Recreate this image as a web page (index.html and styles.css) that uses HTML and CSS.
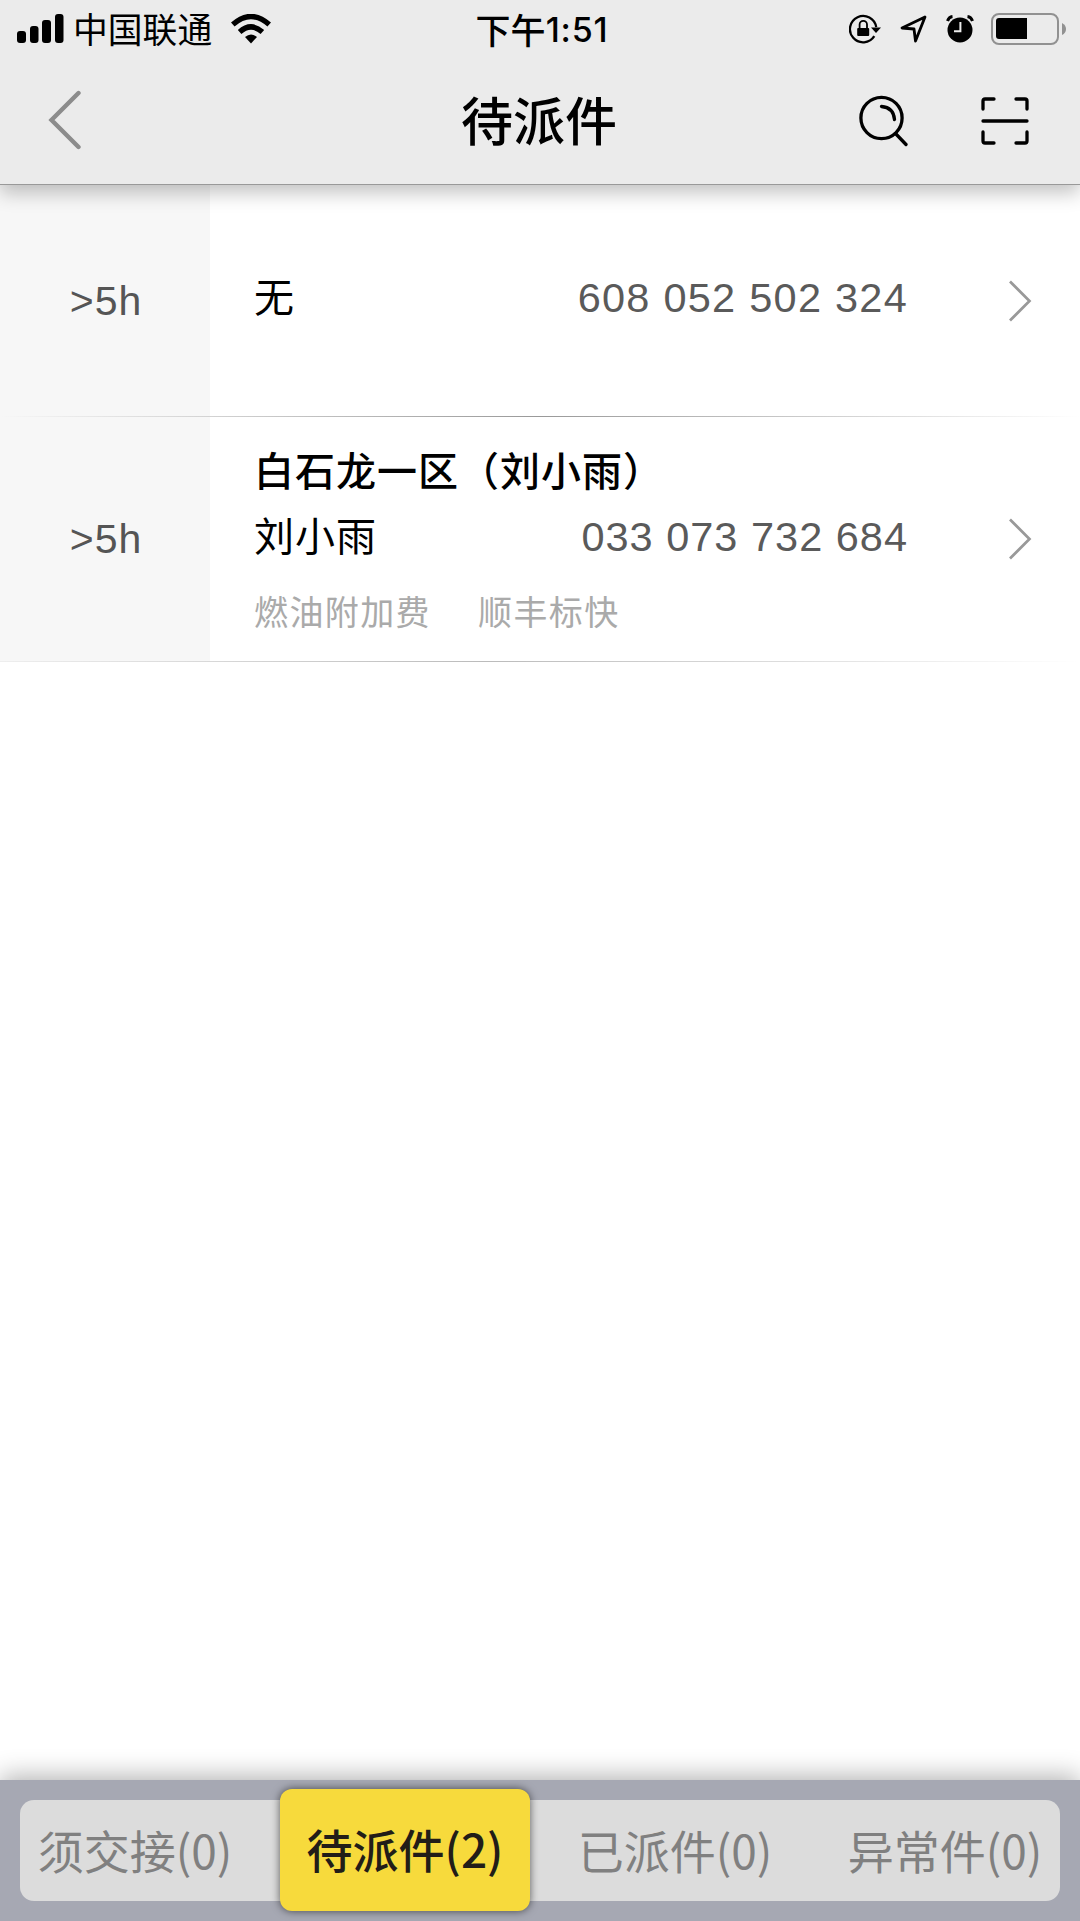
FILE: index.html
```html
<!DOCTYPE html>
<html lang="zh-CN">
<head>
    <meta charset="UTF-8">
    <meta name="viewport" content="width=device-width, initial-scale=1.0">
    <title>待派件</title>
    <link rel="stylesheet" href="styles.css">
</head>
<body>
    <header class="header">
        <div class="status-bar">
            <div class="status-left">
                <svg class="signal" width="47" height="30" viewBox="0 0 47 30">
                    <rect x="0" y="17" width="9" height="12" rx="3"/>
                    <rect x="13" y="12" width="8.5" height="17" rx="3"/>
                    <rect x="25" y="6" width="9" height="23" rx="3"/>
                    <rect x="38" y="0" width="8.5" height="29" rx="3"/>
                </svg>
                <span class="carrier">中国联通</span>
                <svg class="wifi" width="40" height="30" viewBox="0 0 40 30">
                    <path d="M1.8 10.6Q20 -5.5 38.2 10.6M8.6 18Q20 7.8 31.4 18" fill="none" stroke="#000" stroke-width="5.4"/>
                    <path d="M14 23Q20 18 26 23L20 29.5Z"/>
                </svg>
            </div>
            <div class="time">下午<span class="time-digits">1:51</span></div>
            <div class="status-right">
                <svg width="33" height="30" viewBox="0 0 33 30">
                    <path d="M27.2 13.2A13.2 13.2 0 1 0 25.3 22.2" fill="none" stroke="#000" stroke-width="2.3"/>
                    <path d="M22 13.5H32L27 19Z"/>
                    <rect x="8.2" y="14" width="12" height="8" rx="1"/>
                    <path d="M10.6 14V10.5A3.7 3.7 0 0 1 18 10.5V14" fill="none" stroke="#000" stroke-width="1.8"/>
                </svg>
                <svg class="location" width="27" height="28" viewBox="0 0 27 28">
                    <path d="M25 2L2 13L14 14L15.5 26Z" fill="none" stroke="#000" stroke-width="2.8" stroke-linejoin="round"/>
                </svg>
                <svg class="alarm" width="28" height="28" viewBox="0 0 28 28">
                    <circle cx="14" cy="15" r="12.5"/>
                    <path d="M1.5 6Q3 2 6.5 1.6M26.5 6Q25 2 21.5 1.6" fill="none" stroke="#000" stroke-width="3"/>
                    <path d="M14.4 7V16.3H8" fill="none" stroke="#ebebeb" stroke-width="2"/>
                </svg>
                <svg class="battery" width="76" height="32" viewBox="0 0 76 32">
                    <rect x="1" y="1" width="66" height="30" rx="7" fill="none" stroke="#919191" stroke-width="2"/>
                    <path d="M8 5H36V26H8Q5 26 5 23V8Q5 5 8 5Z"/>
                    <path d="M71 10Q75 12 75 16Q75 20 71 22Z" fill="#919191"/>
                </svg>
            </div>
        </div>
        <div class="nav">
            <div class="nav-left">
                <svg width="36" height="60" viewBox="0 0 36 60">
                    <path d="M31.5 3L4.5 30L31.5 57" fill="none" stroke="#8c8c8c" stroke-width="4.4" stroke-linecap="round"/>
                </svg>
            </div>
            <h1 class="title">待派件</h1>
            <div class="nav-right">
                <svg width="50" height="52" viewBox="0 0 50 52" fill="none" stroke="#000" stroke-width="3.3" stroke-linecap="round">
                    <circle cx="23.5" cy="23" r="20.6"/>
                    <path d="M37.5 38.5L48 49.5M23.5 11.5Q35.5 12.5 36.5 24.5"/>
                </svg>
                <svg width="48" height="48" viewBox="0 0 48 48" fill="none" stroke="#000" stroke-width="3.3" stroke-linecap="round">
                    <path d="M2 12V4Q2 2 4 2H13M35 2H44Q46 2 46 4V12M2 35V44Q2 46 4 46H13M35 46H44Q46 46 46 44V35M2 24H46"/>
                </svg>
            </div>
        </div>
    </header>

    <main class="list">
        <div class="item item-short">
            <div class="age">&gt;5h</div>
            <div class="info">
                <div class="person">
                    <span class="name">无</span>
                    <span class="number">608 052 502 324</span>
                </div>
            </div>
            <svg class="chevron" width="24" height="42" viewBox="0 0 24 42">
                <path d="M2 1.5L21.5 21L2 40.5" fill="none" stroke="#999" stroke-width="2.7"/>
            </svg>
        </div>
        <div class="divider"></div>
        <div class="item item-tall">
            <div class="age">&gt;5h</div>
            <div class="info">
                <div class="address">白石龙一区（刘小雨）</div>
                <div class="person">
                    <span class="name">刘小雨</span>
                    <span class="number">033 073 732 684</span>
                </div>
                <div class="tags">
                    <span>燃油附加费</span>
                    <span>顺丰标快</span>
                </div>
            </div>
            <svg class="chevron" width="24" height="42" viewBox="0 0 24 42">
                <path d="M2 1.5L21.5 21L2 40.5" fill="none" stroke="#999" stroke-width="2.7"/>
            </svg>
        </div>
        <div class="divider divider-last"></div>
    </main>

    <footer class="footer">
        <nav class="tabs">
            <div class="tab">须交接(0)</div>
            <div class="tab active">待派件(2)</div>
            <div class="tab">已派件(0)</div>
            <div class="tab">异常件(0)</div>
        </nav>
    </footer>
</body>
</html>
```

FILE: styles.css
```css
* {
    box-sizing: border-box;
}

body {
    margin: 0;
    width: 1080px;
    height: 1921px;
    display: flex;
    flex-direction: column;
    background: #fff;
    color: #000;
    font-family: "Noto Sans CJK SC", sans-serif;
    overflow: hidden;
}

svg {
    display: block;
    flex-shrink: 0;
}

/* Header */
.header {
    height: 185px;
    flex-shrink: 0;
    background: #ebebeb;
    border-bottom: 1px solid #999;
    box-shadow: 0 8px 18px rgba(0, 0, 0, 0.24);
    z-index: 1;
}

.status-bar {
    height: 58px;
    display: grid;
    grid-template-columns: 1fr auto 1fr;
    align-items: center;
    padding: 0 13px 0 17px;
}

.status-left,
.status-right {
    display: flex;
    align-items: center;
}

.status-right {
    justify-content: flex-end;
}

.carrier {
    margin-left: 9px;
    padding-bottom: 2px;
    font-size: 34.8px;
    line-height: 56px;
}

.wifi {
    margin-left: 19px;
}

.time {
    display: flex;
    align-items: center;
    padding-bottom: 1px;
    font-size: 35px;
    line-height: 55px;
    font-weight: 500;
}

.time-digits {
    padding-top: 2px;
    font-family: Inter, sans-serif;
    font-size: 34px;
    font-weight: 500;
    letter-spacing: 0.8px;
}

.location {
    margin-left: 18px;
}

.alarm {
    margin-left: 19px;
}

.battery {
    margin-left: 17px;
}

.nav {
    height: 126px;
    display: grid;
    grid-template-columns: 1fr auto 1fr;
    align-items: center;
    padding: 0 51px 0 47px;
}

.nav-left {
    padding-bottom: 3px;
}

.title {
    margin: 0;
    padding: 0 0 5px 2px;
    font-size: 52px;
    line-height: 76px;
    font-weight: 500;
}

.nav-right {
    display: flex;
    align-items: center;
    justify-content: flex-end;
    gap: 73px;
}

/* List */
.list {
    flex: 1;
}

.item {
    display: flex;
    align-items: center;
}

.item-short {
    height: 231px;
}

.item-tall {
    height: 244px;
}

.age {
    width: 210px;
    height: 100%;
    flex-shrink: 0;
    display: flex;
    align-items: center;
    justify-content: center;
    padding: 1px 0 0 2px;
    background: #f7f7f7;
    color: #555;
    font-family: "Liberation Sans", sans-serif;
    font-size: 41px;
    letter-spacing: 1px;
}

.info {
    width: 698px;
    padding-left: 44px;
}

.item-short .info {
    padding-bottom: 6px;
}

.item-tall .info {
    padding-top: 9px;
}

.address {
    margin-bottom: 2px;
    font-size: 40px;
    line-height: 64px;
    font-weight: 500;
    letter-spacing: 1px;
}

.person {
    display: flex;
    align-items: center;
    justify-content: space-between;
    line-height: 68px;
}

.name {
    margin-top: -5px;
    font-size: 40px;
    line-height: 63px;
    letter-spacing: 1px;
}

.number {
    color: #5a5a5a;
    font-family: "Liberation Sans", sans-serif;
    font-size: 41.5px;
    letter-spacing: 1.25px;
}

.item-tall .number {
    letter-spacing: 1px;
}

.tags {
    display: flex;
    gap: 47px;
    color: #aaa;
    font-size: 34px;
    line-height: 80px;
    letter-spacing: 1.4px;
}

.chevron {
    margin-left: 100px;
}

.divider {
    height: 1px;
    background: linear-gradient(to right, #f7f7f7, #999 50%, #fff);
}

.divider-last {
    background: linear-gradient(to right, #eee, #bbb 45%, #fff);
}

/* Bottom tabs */
.footer {
    height: 141px;
    flex-shrink: 0;
    padding: 20px;
    background: #a6a8b3;
    box-shadow: 0 -4px 24px rgba(0, 0, 0, 0.3);
}

.tabs {
    height: 101px;
    display: grid;
    grid-template-columns: repeat(4, 270px);
    justify-content: center;
    background: #dcdcdc;
    border-radius: 14px;
}

.tab {
    display: flex;
    align-items: center;
    justify-content: center;
    padding-bottom: 4px;
    color: #808080;
    font-size: 46px;
    white-space: nowrap;
}

.tab.active {
    margin: -11px 10px -10px;
    background: #f7da3c;
    border-radius: 12px;
    box-shadow: 0 0 8px rgba(0, 0, 0, 0.6);
    color: #221d18;
    font-weight: 500;
}
```
